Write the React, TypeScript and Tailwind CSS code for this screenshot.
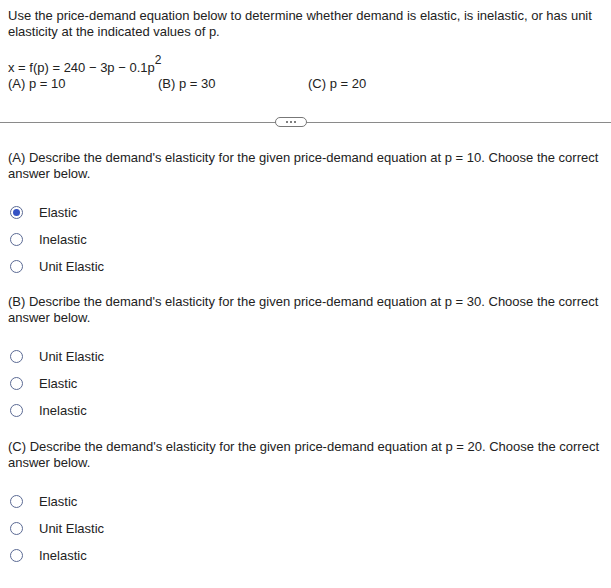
import React from "react";

const font = { fontFamily: '"Liberation Sans", Arial, sans-serif' };

function Radio({ checked = false, label }: { checked?: boolean; label: string }) {
  return (
    <div className="flex items-center h-[27px]">
      <div className="w-[32px] flex justify-center">
        <span className="w-[13px] h-[13px] rounded-full border border-[#5b6a94] bg-white flex items-center justify-center">
          {checked && <span className="w-[7px] h-[7px] rounded-full bg-[#3452c4]" />}
        </span>
      </div>
      <span className="ml-[7px]">{label}</span>
    </div>
  );
}

function Question({ letter, p, options, checked }: { letter: string; p: number; options: string[]; checked?: number }) {
  const text = `(${letter}) Describe the demand's elasticity for the given price-demand equation at p = ${p}. Choose the correct answer below.`;
  return (
    <div>
      <p className="px-[8px] leading-[16px]">{text}</p>
      <div className="mt-[17px]">
        {options.map((o, i) => (
          <Radio key={o} label={o} checked={checked === i} />
        ))}
      </div>
    </div>
  );
}

export default function App() {
  return (
    <div className="w-[611px] h-[588px] bg-white text-[#222] text-[13px]" style={font}>
      <div className="px-[8px] pt-[8px]">
        <p className="leading-[16px]">
          Use the price-demand equation below to determine whether demand is elastic, is inelastic, or has unit elasticity at the indicated values of p.
        </p>
        <div className="mt-[20px] leading-[16px]">
          x = f(p) = 240 − 3p − 0.1p<span className="relative top-[-8px] text-[12px]">2</span>
        </div>
        <div className="flex leading-[16px]">
          <span className="w-[150px]">(A) p = 10</span>
          <span className="w-[150px]">(B) p = 30</span>
          <span>(C) p = 20</span>
        </div>
      </div>
      <div className="relative mt-[25px] h-[10px] flex items-center">
        <div className="w-full h-px bg-[#8a8a8a]" />
        <div className="absolute left-[275px] top-0 w-[32px] h-[10px] rounded-full border border-[#777] bg-white flex items-center justify-center gap-[2px]">
          <span className="w-[2px] h-[2px] bg-[#555] rounded-full" />
          <span className="w-[2px] h-[2px] bg-[#555] rounded-full" />
          <span className="w-[2px] h-[2px] bg-[#555] rounded-full" />
        </div>
      </div>
      <div className="mt-[23px]">
        <Question letter="A" p={10} options={["Elastic", "Inelastic", "Unit Elastic"]} checked={0} />
      </div>
      <div className="mt-[14px]">
        <Question letter="B" p={30} options={["Unit Elastic", "Elastic", "Inelastic"]} />
      </div>
      <div className="mt-[15px]">
        <Question letter="C" p={20} options={["Elastic", "Unit Elastic", "Inelastic"]} />
      </div>
    </div>
  );
}
